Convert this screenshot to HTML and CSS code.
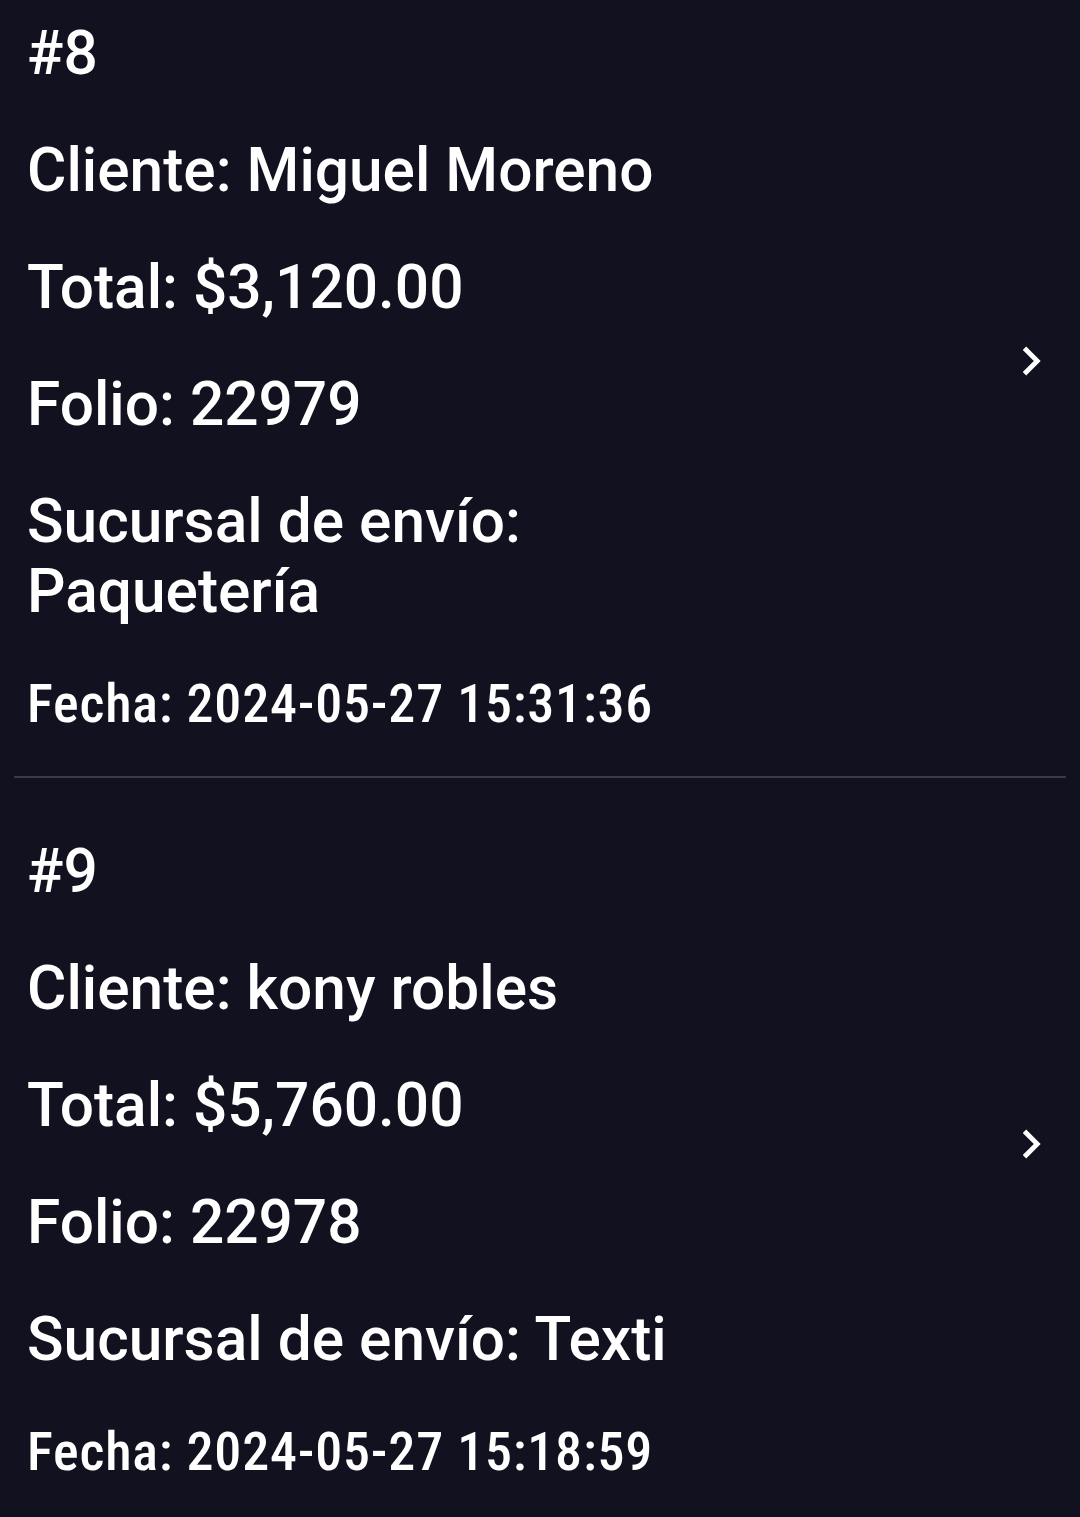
FILE: index.html
```html
<!DOCTYPE html>
<html>
<head>
    <title>Pedidos</title>
    <link rel="stylesheet" href="styles.css">
</head>
<body>
    <div id="orders">
        <!-- Pedido 8 -->
        <div class="order">
            <div class="order-info">
                <div class="line">#8</div>
                <div class="line">Cliente: Miguel Moreno</div>
                <div class="line">Total: $3,120.00</div>
                <div class="line">Folio: 22979</div>
                <div class="line">Sucursal de envío: Paquetería</div>
                <div class="line date">Fecha: 2024-05-27 15:31:36</div>
            </div>
            <svg class="chevron" viewBox="0 0 24 24"><path d="M8.59 16.59L13.17 12 8.59 7.41 10 6l6 6-6 6-1.41-1.41z"/></svg>
        </div>
        <div class="divider"></div>
        <!-- Pedido 9 -->
        <div class="order">
            <div class="order-info">
                <div class="line">#9</div>
                <div class="line">Cliente: kony robles</div>
                <div class="line">Total: $5,760.00</div>
                <div class="line">Folio: 22978</div>
                <div class="line">Sucursal de envío: Texti</div>
                <div class="line date">Fecha: 2024-05-27 15:18:59</div>
            </div>
            <svg class="chevron" viewBox="0 0 24 24"><path d="M8.59 16.59L13.17 12 8.59 7.41 10 6l6 6-6 6-1.41-1.41z"/></svg>
        </div>
    </div>
</body>
</html>
```

FILE: styles.css
```css
body {
    margin: 0;
    background-color: #11111f;
    color: #fff;
    font-family: Roboto, "Noto Sans", sans-serif;
    font-weight: 500;
    overflow: hidden;
}

#orders {
    margin-top: -40px; /* list is scrolled a bit */
}

.order {
    display: flex;
    align-items: center;
    padding: 59px 20px 43px 27px;
}

.order-info {
    flex: 1;
    display: flex;
    flex-direction: column;
    gap: 47px;
}

.line {
    font-size: 60.4px;
    line-height: 70px;
    max-width: 740px;
}

.date {
    font-size: 54px;
    line-height: 59px;
    font-stretch: condensed;
    letter-spacing: 0.8px;
}

.chevron {
    width: 58px;
    height: 58px;
    fill: #fff;
    margin-bottom: 30px;
}

.divider {
    height: 2px;
    margin: 0 14px;
    background-color: #3a3a48;
}
```
